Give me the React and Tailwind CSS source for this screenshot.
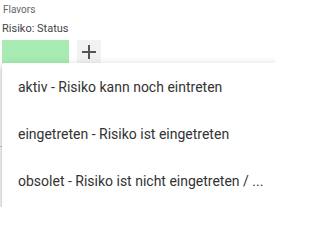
import React from 'react';

const options = [
  'aktiv - Risiko kann noch eintreten',
  'eingetreten - Risiko ist eingetreten',
  'obsolet - Risiko ist nicht eingetreten / ...',
];

export default function App() {
  return (
    <div className="relative w-[275px] h-[207px] overflow-hidden bg-white font-['Roboto',sans-serif]">
      <div className="pl-[3px] pt-[3px] text-[10px] leading-[14px] text-[#666]">Flavors</div>
      <div className="pl-[2px] pt-[5px] text-[11px] leading-[14px] text-[#444]">Risiko: Status</div>
      <div className="flex items-start gap-[8px] pl-[2px] pt-[4px]">
        <div className="w-[67px] h-[24px] bg-[#a8ecb4]" />
        <button className="w-[24px] h-[24px] bg-[#f2f2f2] flex items-center justify-center text-[#555]">
          <svg width="16" height="16" viewBox="0 0 16 16">
            <path d="M8 1v14M1 8h14" stroke="currentColor" strokeWidth="2" />
          </svg>
        </button>
      </div>
      <div className="absolute left-0 top-[146px] w-[2px] h-px bg-[#ccc]" />

      {/* Dropdown menu */}
      <div className="absolute left-[2px] top-[63px] w-[300px] bg-white rounded-[2px] shadow-[0_2px_4px_-1px_rgba(0,0,0,0.2),0_4px_5px_0_rgba(0,0,0,0.14),0_1px_10px_0_rgba(0,0,0,0.12)] pt-[1px] pb-[12px]">
        {options.map((o, i) => (
          <div key={i} className="h-[47px] flex items-center px-[16px] text-[14px] text-[#333] whitespace-nowrap">
            {o}
          </div>
        ))}
      </div>
    </div>
  );
}
